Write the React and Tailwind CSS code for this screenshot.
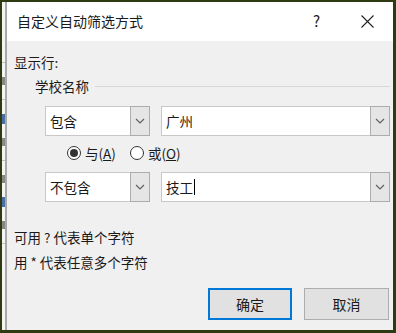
import React from 'react';

const font = { fontFamily: '"Noto Sans CJK SC", "Microsoft YaHei", sans-serif' };

const Chevron = () => (
  <svg width="10" height="6" viewBox="0 0 10 6" fill="none">
    <path d="M1 1l4 4 4-4" stroke="#606060" strokeWidth="1.2" />
  </svg>
);

const Combo = ({ value, width, caret }) => (
  <div className={`flex h-[30px] border border-[#c8c8c8] bg-white ${width}`}>
    <div className="flex-1 flex items-center pl-[4px] text-[13.5px] text-[#1a1a1a]">
      {value}
      {caret && <span className="ml-[1px] w-[1px] h-[16px] bg-black" />}
    </div>
    <div className="w-[20px] -my-[1px] -mr-[1px] flex items-center justify-center bg-[#e5e5e5] border border-[#adadad]">
      <Chevron />
    </div>
  </div>
);

const Radio = ({ checked, label, hot }) => (
  <div className="flex items-center gap-[4px]">
    <span className="w-[14px] h-[14px] rounded-full border border-[#333] bg-white flex items-center justify-center">
      {checked && <span className="w-[8px] h-[8px] rounded-full bg-[#333]" />}
    </span>
    <span className="text-[13.5px] text-[#1a1a1a]">
      {label}(<span className="underline">{hot}</span>)
    </span>
  </div>
);

export default function App() {
  return (
    <div className="w-[396px] h-[333px] bg-[#2d3a12] pt-[2px] pl-[2px] pr-[3px] pb-[3px] flex" style={font}>
      {/* bit of the sheet behind */}
      <div className="w-[3px] bg-[#f4f4f4] flex flex-col gap-[14px] pt-[60px]">
        <span className="h-[1px] bg-[#c0c0c0]" />
        <span className="h-[8px] bg-[#888]" />
        <span className="h-[1px] bg-[#c0c0c0]" />
        <span className="h-[10px] bg-[#4a6fa5]" />
        <span className="h-[8px] bg-[#888]" />
        <span className="h-[1px] bg-[#c0c0c0]" />
        <span className="h-[8px] bg-[#888]" />
        <span className="h-[10px] bg-[#4a6fa5]" />
        <span className="h-[8px] bg-[#888]" />
        <span className="h-[1px] bg-[#c0c0c0]" />
      </div>
      <div className="w-[2px] bg-[#a8a8a8]" />
      <div className="flex-1 flex flex-col">
        <div className="h-[39px] bg-white flex items-center pl-[10px] text-[14px] text-[#1a1a1a]">
          <span className="flex-1">自定义自动筛选方式</span>
          <span className="w-[20px] text-[15px] text-[#222]">?</span>
          <span className="w-[46px] flex justify-center pr-[6px] ml-[14px]">
            <svg width="13" height="13" viewBox="0 0 13 13">
              <path d="M0.5 0.5l12 12M12.5 0.5l-12 12" stroke="#222" strokeWidth="1.1" />
            </svg>
          </span>
        </div>
        <div className="flex-1 bg-[#f0f0f0] flex flex-col pl-[7px] pr-[3px] text-[13.5px] text-[#1a1a1a]">
          <div className="mt-[11px] h-[20px] leading-[20px]">显示行:</div>
          <div className="mt-[4px] h-[20px] flex items-center pl-[21px]">
            <span className="leading-[20px]">学校名称</span>
            <span className="flex-1 ml-[6px] h-[1px] bg-[#d8d8d8]" />
          </div>
          <div className="mt-[10px] flex gap-[11px] pl-[31px]">
            <Combo value="包含" width="w-[105px]" />
            <Combo value="广州" width="w-[229px]" />
          </div>
          <div className="mt-[7px] h-[20px] flex items-center gap-[14px] pl-[53px]">
            <Radio checked label="与" hot="A" />
            <Radio label="或" hot="O" />
          </div>
          <div className="mt-[9px] flex gap-[11px] pl-[31px]">
            <Combo value="不包含" width="w-[105px]" />
            <Combo value="技工" width="w-[229px]" caret />
          </div>
          <div className="mt-[25px] h-[20px] leading-[20px]">可用 ? 代表单个字符</div>
          <div className="mt-[5px] h-[20px] leading-[20px]">用 * 代表任意多个字符</div>
          <div className="mt-[16px] flex justify-end gap-[12px] pr-[1px]">
            <button className="w-[84px] h-[32px] bg-[#e1e1e1] border-2 border-[#0078d7] text-[14px]">确定</button>
            <button className="w-[85px] h-[32px] bg-[#e1e1e1] border border-[#adadad] text-[14px]">取消</button>
          </div>
        </div>
      </div>
    </div>
  );
}
